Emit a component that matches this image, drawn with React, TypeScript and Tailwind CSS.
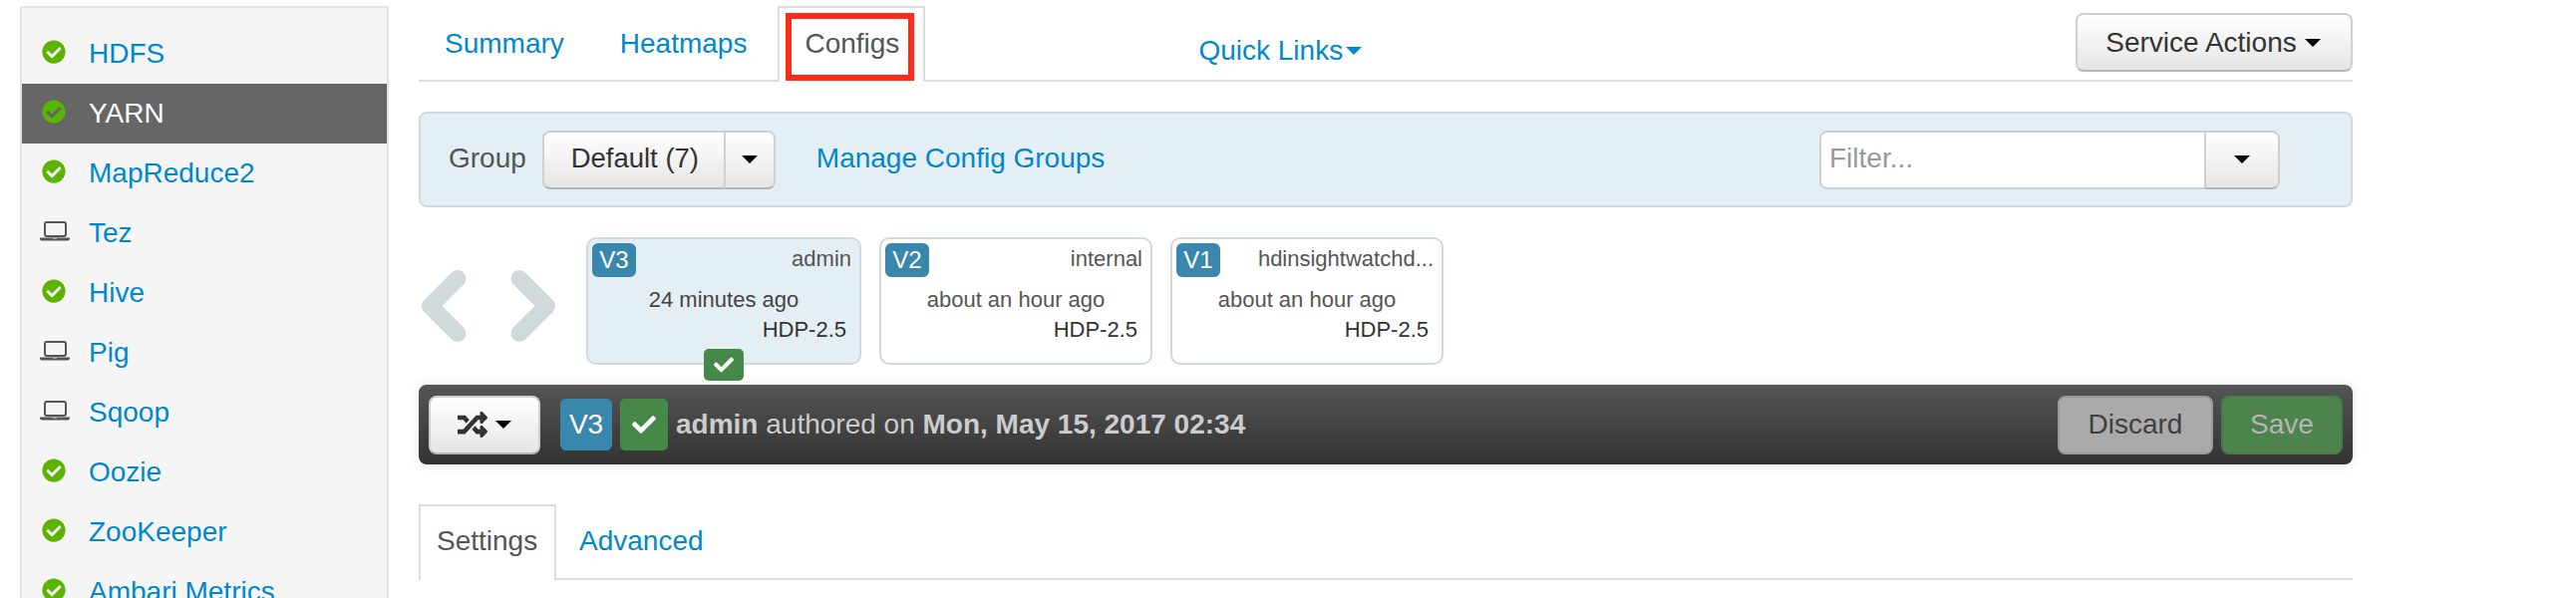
import React from 'react';
import { FaCheck, FaCheckCircle, FaRandom } from 'react-icons/fa';

const services = [
  { name: 'HDFS', status: 'ok' },
  { name: 'YARN', status: 'ok', active: true },
  { name: 'MapReduce2', status: 'ok' },
  { name: 'Tez', status: 'client' },
  { name: 'Hive', status: 'ok' },
  { name: 'Pig', status: 'client' },
  { name: 'Sqoop', status: 'client' },
  { name: 'Oozie', status: 'ok' },
  { name: 'ZooKeeper', status: 'ok' },
  { name: 'Ambari Metrics', status: 'ok' },
];

const versions = [
  { v: 'V3', user: 'admin', time: '24 minutes ago', current: true },
  { v: 'V2', user: 'internal', time: 'about an hour ago' },
  { v: 'V1', user: 'hdinsightwatchd...', time: 'about an hour ago' },
];

const Caret = () => (
  <span className="inline-block w-0 h-0 border-x-[8px] border-t-[8px] border-x-transparent border-t-black" />
);

const Laptop = () => (
  <svg width="30" height="20" viewBox="0 0 30 20" className="ml-[-2px]">
    <rect x="5" y="1" width="21" height="14" rx="2" fill="none" stroke="#555" strokeWidth="2" />
    <path d="M0 16.5h30v1a2 2 0 0 1-2 2H2a2 2 0 0 1-2-2z" fill="#555" />
    <rect x="13" y="17" width="4" height="1" fill="#aaa" />
  </svg>
);

const btn =
  'flex items-center justify-center bg-linear-to-b from-white to-[#e6e6e6] border-2 border-[#d0d0d0] border-b-[#b5b5b5] text-[#333]';

const Sidebar = () => (
  <div className="ml-[20px] mt-[6px] w-[370px] h-[700px] shrink-0 bg-[#f5f5f5] border-2 border-[#e3e3e3] pt-[16px]">
    {services.map((s) => (
      <div
        key={s.name}
        className={`flex items-center h-[60px] ${s.active ? 'bg-[#666] text-white' : 'text-[#0088cc]'}`}
      >
        <span className="w-[67px] pl-[20px] mb-[4px] shrink-0 flex items-center">
          {s.status === 'ok' ? <FaCheckCircle className="w-[24px] h-[24px] text-[#5ab400]" /> : <Laptop />}
        </span>
        <span>{s.name}</span>
      </div>
    ))}
  </div>
);

const VersionCard = ({ v, user, time, current }: { v: string; user: string; time: string; current?: boolean }) => (
  <div
    className={`relative h-[128px] border-2 border-[#d2d9dd] rounded-[10px] ${
      current ? 'w-[276px] bg-[#e4eff5]' : 'w-[274px] bg-white'
    } text-[22px] leading-[30px] text-[#555]`}
  >
    <div className="flex justify-between pl-[4px] pr-[8px] pt-[4px]">
      <span className="flex items-center justify-center h-[34px] w-[44px] bg-[#3a87ad] rounded-[6px] text-white text-[24px]">
        {v}
      </span>
      <span className="mt-[1px]">{user}</span>
    </div>
    <div className={`text-center mt-[8px] ${current ? 'text-[#444]' : ''}`}>{time}</div>
    <div className="text-right pr-[13px] text-[#333]">HDP-2.5</div>
    {current && (
      <span className="absolute -bottom-[18px] left-[116px] flex items-center justify-center w-[40px] h-[32px] bg-[#468847] rounded-[5px] text-white">
        <FaCheck className="w-[20px] h-[20px]" />
      </span>
    )}
  </div>
);

export default function App() {
  return (
    <div className="flex h-[600px] w-[2584px] overflow-hidden bg-white text-[28px] leading-[40px] text-[#555] font-['Liberation_Sans',Arial,sans-serif]">
      <Sidebar />

      <div className="ml-[30px] w-[1940px] shrink-0">
        {/* top tabs */}
        <div className="flex h-[82px] border-b-2 border-[#ddd]">
          <a className="mt-[24px] ml-[26px] text-[#0088cc]">Summary</a>
          <a className="mt-[24px] ml-[56px] text-[#0088cc]">Heatmaps</a>
          <div className="relative ml-[31px] mt-[6px] w-[148px] h-[76px] border-2 border-b-0 border-[#ddd] bg-white pl-[25px] pt-[16px]">
            Configs
            <span className="absolute left-[6px] top-[5px] w-[129px] h-[68px] border-[6px] border-[#ff2a1a]" />
          </div>
          <a className="mt-[31px] ml-[274px] flex items-center gap-[3px] text-[#0088cc] h-[40px]">
            Quick Links
            <span className="w-0 h-0 border-x-[8px] border-t-[8px] border-x-transparent border-t-[#0088cc]" />
          </a>
          <button className={`${btn} ml-auto mt-[13px] w-[278px] h-[59px] rounded-[8px] gap-[8px] pr-[2px]`}>
            Service Actions <Caret />
          </button>
        </div>

        {/* config group filter */}
        <div className="flex items-center mt-[30px] h-[96px] bg-[#e4eff5] border-2 border-[#d2d9dd] rounded-[8px] pl-[28px]">
          <span className="pb-[2px]">Group</span>
          <button className={`${btn} ml-[16px] w-[184px] h-[59px] rounded-l-[8px] text-[27.5px] pl-[2px] pb-[2px]`}>
            Default (7)
          </button>
          <button className={`${btn} -ml-[2px] w-[52px] h-[59px] rounded-r-[8px]`}>
            <Caret />
          </button>
          <a className="ml-[41px] pb-[2px] text-[#0088cc]">Manage Config Groups</a>
          <div className="flex ml-auto mr-[71px] h-[59px]">
            <input
              placeholder="Filter..."
              className="w-[386px] h-full bg-white border-2 border-r-0 border-[#d0d0d0] rounded-l-[8px] px-[8px] pb-[2px] text-[28px] placeholder:text-[#999] outline-none"
            />
            <button className={`${btn} w-[76px] h-full rounded-r-[8px]`}>
              <Caret />
            </button>
          </div>
        </div>

        {/* version ribbon */}
        <div className="flex items-center mt-[30px] h-[128px]">
          <svg width="138" height="84" viewBox="0 0 138 84" className="mr-[30px] shrink-0">
            <polyline points="39,19.5 11.5,47 39,74.5" fill="none" stroke="#d2d9dd" strokeWidth="17" strokeLinecap="round" strokeLinejoin="round" />
            <polyline points="101,19.5 128.5,47 101,74.5" fill="none" stroke="#d2d9dd" strokeWidth="17" strokeLinecap="round" strokeLinejoin="round" />
          </svg>
          <div className="flex gap-[18px]">
            {versions.map((item) => (
              <VersionCard key={item.v} {...item} />
            ))}
          </div>
        </div>

        {/* current version bar */}
        <div className="flex items-center mt-[20px] h-[80px] px-[10px] rounded-[8px] bg-linear-to-b from-[#555] to-[#333] shadow-[0_0_12px_rgba(0,0,0,0.1)]">
          <button className={`${btn} w-[112px] h-[59px] rounded-[8px] gap-[8px]`}>
            <FaRandom className="w-[30px] h-[30px] text-[#333]" />
            <Caret />
          </button>
          <span className="ml-[20px] flex items-center justify-center w-[52px] h-[52px] bg-[#3a87ad] rounded-[6px] text-white">V3</span>
          <span className="ml-[8px] flex items-center justify-center w-[48px] h-[52px] bg-[#468847] rounded-[5px] text-white">
            <FaCheck className="w-[24px] h-[24px]" />
          </span>
          <span className="ml-[8px] text-[#ccc]">
            <b>admin</b> authored on <b>Mon, May 15, 2017 02:34</b>
          </span>
          <button className="ml-auto flex items-center justify-center w-[156px] h-[59px] rounded-[8px] bg-[#aaa] border-2 border-[#999] text-[#3f3f3f]">
            Discard
          </button>
          <button className="ml-[8px] flex items-center justify-center w-[122px] h-[59px] rounded-[8px] bg-[#4d834d] border-2 border-[#467a46] text-[#b5b5b5]">
            Save
          </button>
        </div>

        {/* settings tabs */}
        <div className="flex h-[76px] mt-[40px] border-b-2 border-[#ddd]">
          <div className="w-[138px] h-[76px] border-2 border-b-0 border-[#ddd] bg-white pl-[16px] pt-[15px]">Settings</div>
          <a className="ml-[23px] pt-[17px] text-[#0088cc]">Advanced</a>
        </div>
      </div>
    </div>
  );
}
